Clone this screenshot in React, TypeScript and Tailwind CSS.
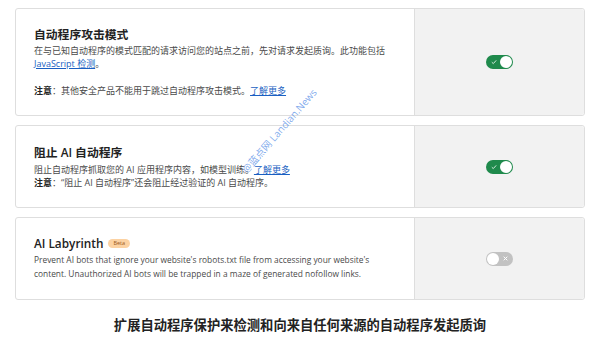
import React from "react";

const FONT = "font-['Open_Sans','Noto_Sans_CJK_SC',sans-serif]";

function Toggle({ on }: { on: boolean }) {
  if (on) {
    return (
      <div className="relative flex h-[14px] w-[27px] items-center rounded-full bg-[#1f8a4c]">
        <svg className="absolute left-[5px] top-[4px]" width="6" height="6" viewBox="0 0 6 6">
          <path d="M0.8 3.2 L2.3 4.6 L5.2 1.4" stroke="#cfe9d9" strokeWidth="1" fill="none" />
        </svg>
        <div className="absolute right-[1px] top-[1px] h-[12px] w-[12px] rounded-full bg-white" />
      </div>
    );
  }
  return (
    <div className="relative flex h-[14px] w-[27px] items-center rounded-full bg-[#c2c2c2]">
      <div className="absolute left-[1px] top-[1px] h-[12px] w-[12px] rounded-full bg-white" />
      <svg className="absolute right-[5px] top-[4.5px]" width="5" height="5" viewBox="0 0 5 5">
        <path d="M0.7 0.7 L4.3 4.3 M4.3 0.7 L0.7 4.3" stroke="#ffffff" strokeWidth="1" />
      </svg>
    </div>
  );
}

function Card({ children, on }: { children: React.ReactNode; on: boolean }) {
  return (
    <div className="flex rounded-[3px] border border-[#dedede] bg-white">
      <div className="w-[398px] px-[18px] py-[18px]">{children}</div>
      <div className="flex flex-1 items-center justify-center rounded-r-[3px] border-l border-[#dedede] bg-[#f2f2f2]">
        <Toggle on={on} />
      </div>
    </div>
  );
}

const link = "text-[#1a5fc2] underline underline-offset-[1px]";
const title = "text-[11.8px] font-semibold leading-[15px] text-[#222]";
const body = "text-[9px] leading-[13px] text-[#4a4a4a]";

export default function App() {
  return (
    <div className={`relative h-[338px] w-[600px] overflow-hidden bg-white ${FONT}`}>
      <div className="flex flex-col gap-[9px] px-[15px] pt-[8px]">
        <Card on>
          <div className={title}>自动程序攻击模式</div>
          <p className={`mt-[2px] ${body}`}>
            在与已知自动程序的模式匹配的请求访问您的站点之前，先对请求发起质询。此功能包括{" "}
            <span className={link}>JavaScript 检测</span>。
          </p>
          <p className={`mt-[14px] ${body}`}>
            <span className="font-bold text-[#222]">注意</span>：其他安全产品不能用于跳过自动程序攻击模式。
            <span className={link}>了解更多</span>
          </p>
        </Card>
        <Card on>
          <div className={`pt-[1px] ${title}`}>阻止 AI 自动程序</div>
          <p className={`mt-[3px] ${body}`}>
            阻止自动程序抓取您的 AI 应用程序内容，如模型训练。<span className={link}>了解更多</span>
          </p>
          <p className={body}>
            <span className="font-bold text-[#222]">注意</span>：“阻止 AI 自动程序”还会阻止经过验证的 AI 自动程序。
          </p>
        </Card>
        <Card on={false}>
          <div className="flex items-center gap-[5px]">
            <span className={title}>AI Labyrinth</span>
            <span className="rounded-full bg-[#fcd2a2] px-[5px] text-[5.5px] leading-[9px] text-[#9a5a1c]">Beta</span>
          </div>
          <p className="mt-[2px] text-[8.4px] leading-[14px] text-[#4a4a4a]">
            Prevent AI bots that ignore your website's robots.txt file from accessing your website's content.
            Unauthorized AI bots will be trapped in a maze of generated nofollow links.
          </p>
        </Card>
      </div>
      <div className="mt-[16px] text-center text-[13.3px] font-bold leading-[18px] text-[#222]">
        扩展自动程序保护来检测和向来自任何来源的自动程序发起质询
      </div>
      <div className="pointer-events-none absolute left-[244px] top-[166px] origin-left -rotate-[49deg] whitespace-nowrap text-[10px] leading-[10px] text-[#5f95e8]/80">
        @蓝点网 Landian.News
      </div>
    </div>
  );
}
